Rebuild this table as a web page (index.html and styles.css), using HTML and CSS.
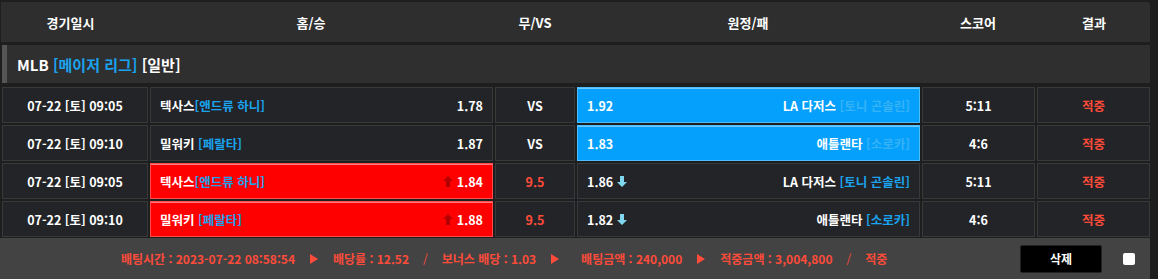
FILE: index.html
```html
<!DOCTYPE html>
<html lang="ko">
<head>
<meta charset="utf-8">
<link rel="stylesheet" href="styles.css">
</head>
<body>
<div class="board">
  <div class="head">
    <div class="h h1">경기일시</div>
    <div class="h h2">홈/승</div>
    <div class="h h3">무/VS</div>
    <div class="h h4">원정/패</div>
    <div class="h h5">스코어</div>
    <div class="h h6">결과</div>
  </div>
  <div class="league">MLB <span class="blue">[메이저 리그]</span> [일반]</div>

  <div class="rows">
    <div class="row">
      <div class="cell c-date">07-22 [토] 09:05</div>
      <div class="cell c-home"><span class="team">텍사스<span class="blue">[앤드류 하니]</span></span><span class="odd">1.78</span></div>
      <div class="cell c-vs">VS</div>
      <div class="cell c-away sel-blue"><span class="odd">1.92</span><span class="team">LA 다저스 <span class="blue-soft">[토니 곤솔린]</span></span></div>
      <div class="cell c-score">5:11</div>
      <div class="cell c-res">적중</div>
    </div>
    <div class="row">
      <div class="cell c-date">07-22 [토] 09:10</div>
      <div class="cell c-home"><span class="team">밀워키 <span class="blue">[페랄타]</span></span><span class="odd">1.87</span></div>
      <div class="cell c-vs">VS</div>
      <div class="cell c-away sel-blue"><span class="odd">1.83</span><span class="team">애틀랜타 <span class="blue-soft">[소로카]</span></span></div>
      <div class="cell c-score">4:6</div>
      <div class="cell c-res">적중</div>
    </div>
    <div class="row">
      <div class="cell c-date">07-22 [토] 09:05</div>
      <div class="cell c-home sel-red"><span class="team">텍사스<span class="blue">[앤드류 하니]</span></span><span class="odd"><svg class="arr" width="10" height="11" viewBox="0 0 10 11"><path d="M5 0 L10 5 L7 5 L7 11 L3 11 L3 5 L0 5 Z" fill="#b30000"/></svg>1.84</span></div>
      <div class="cell c-vs red">9.5</div>
      <div class="cell c-away"><span class="odd">1.86<svg class="arr-d" width="10" height="11" viewBox="0 0 10 11"><path d="M5 11 L10 6 L7 6 L7 0 L3 0 L3 6 L0 6 Z" fill="#7fd6ee"/></svg></span><span class="team">LA 다저스 <span class="blue">[토니 곤솔린]</span></span></div>
      <div class="cell c-score">5:11</div>
      <div class="cell c-res">적중</div>
    </div>
    <div class="row">
      <div class="cell c-date">07-22 [토] 09:10</div>
      <div class="cell c-home sel-red"><span class="team">밀워키 <span class="blue">[페랄타]</span></span><span class="odd"><svg class="arr" width="10" height="11" viewBox="0 0 10 11"><path d="M5 0 L10 5 L7 5 L7 11 L3 11 L3 5 L0 5 Z" fill="#b30000"/></svg>1.88</span></div>
      <div class="cell c-vs red">9.5</div>
      <div class="cell c-away"><span class="odd">1.82<svg class="arr-d" width="10" height="11" viewBox="0 0 10 11"><path d="M5 11 L10 6 L7 6 L7 0 L3 0 L3 6 L0 6 Z" fill="#7fd6ee"/></svg></span><span class="team">애틀랜타 <span class="blue">[소로카]</span></span></div>
      <div class="cell c-score">4:6</div>
      <div class="cell c-res">적중</div>
    </div>
  </div>

  <div class="foot">
    <div class="info">
      <span>배팅시간 : 2023-07-22 08:58:54</span>
      <span class="tri"></span>
      <span>배당률 : 12.52</span>
      <span class="sl">/</span>
      <span>보너스 배당 : 1.03</span>
      <span class="tri"></span>
      <span class="sp">배팅금액 : 240,000</span>
      <span class="tri"></span>
      <span>적중금액 : 3,004,800</span>
      <span class="sl">/</span>
      <span>적중</span>
    </div>
    <button class="del">삭제</button>
    <span class="chk"></span>
  </div>
</div>
</body>
</html>
```

FILE: styles.css
```css
* { box-sizing: border-box; }
html, body { margin: 0; padding: 0; }
body {
  background: #1e1e1e;
  font-family: "Noto Sans CJK KR", "Noto Sans", sans-serif;
  color: #fff;
  width: 1158px;
  height: 279px;
  overflow: hidden;
}
.board { width: 1150px; padding-top: 2px; }

.head {
  margin-left: 1px;
  height: 40px;
  background: #2e2e2e;
  border-radius: 0 3px 0 0;
  display: grid;
  grid-template-columns: 139px 342px 106px 320px 140px 92px;
  align-items: center;
  font-size: 13px;
  font-weight: 700;
}
.h { text-align: center; }

.league {
  margin: 3px 0 0 2px;
  height: 38px;
  background: #2f2f2f;
  border-left: 5px solid #555;
  padding-left: 10px;
  display: flex;
  align-items: center;
  font-size: 15px;
  font-weight: 700;
  white-space: pre;
}
.blue { color: #1aa3ee; }
.blue-soft { color: #36b2f7; }
.red { color: #ff4b3a; }

.rows {
  margin-top: 4px;
  display: flex;
  flex-direction: column;
  gap: 2px;
  padding-left: 2px;
}
.row {
  display: grid;
  grid-template-columns: 146px 343px 80px 343px 113px 113px;
  column-gap: 2px;
  height: 36px;
}
.cell {
  background: #232427;
  border: 1px solid #38393b;
  display: flex;
  align-items: center;
  font-size: 12.5px;
  font-weight: 700;
  white-space: pre;
}
.c-date, .c-vs, .c-score, .c-res { justify-content: center; }
.c-res { color: #ff4b3a; }
.c-home { justify-content: space-between; padding: 0 9px 0 9px; }
.c-away { justify-content: space-between; padding: 0 9px 0 9px; }
.odd { display: flex; align-items: center; }
.arr { margin-right: 4px; }
.arr-d { margin-left: 4px; }

.sel-red {
  background: #ff0000;
  border-color: #ff4d4d;
  box-shadow: inset 0 1px 0 #ff7a7a;
}
.sel-blue {
  background: #04a0fb;
  border-color: #4cbdfd;
  box-shadow: inset 0 1px 0 #6ecbff;
}

.foot {
  margin-top: 1px;
  height: 41px;
  background: #434343;
  display: flex;
  align-items: center;
  padding-left: 121px;
  padding-right: 15px;
}
.info {
  display: flex;
  align-items: center;
  color: #ff4b3a;
  font-size: 12px;
  font-weight: 700;
  white-space: pre;
  flex: 1;
}
.tri {
  width: 0; height: 0;
  border-top: 5px solid transparent;
  border-bottom: 5px solid transparent;
  border-left: 8px solid #ff4b3a;
  margin: 0 15px 0 15px;
}
.sl { margin: 0 14px; font-weight: 400; }
.sp { margin-left: 7px; }
.del {
  width: 82px;
  height: 28px;
  background: #000;
  border: 1px solid #222;
  border-radius: 2px;
  color: #fff;
  font-family: inherit;
  font-size: 12px;
  font-weight: 700;
  padding: 0;
}
.chk {
  width: 12px;
  height: 12px;
  background: #fff;
  border-radius: 2px;
  margin-left: 21px;
}
```
